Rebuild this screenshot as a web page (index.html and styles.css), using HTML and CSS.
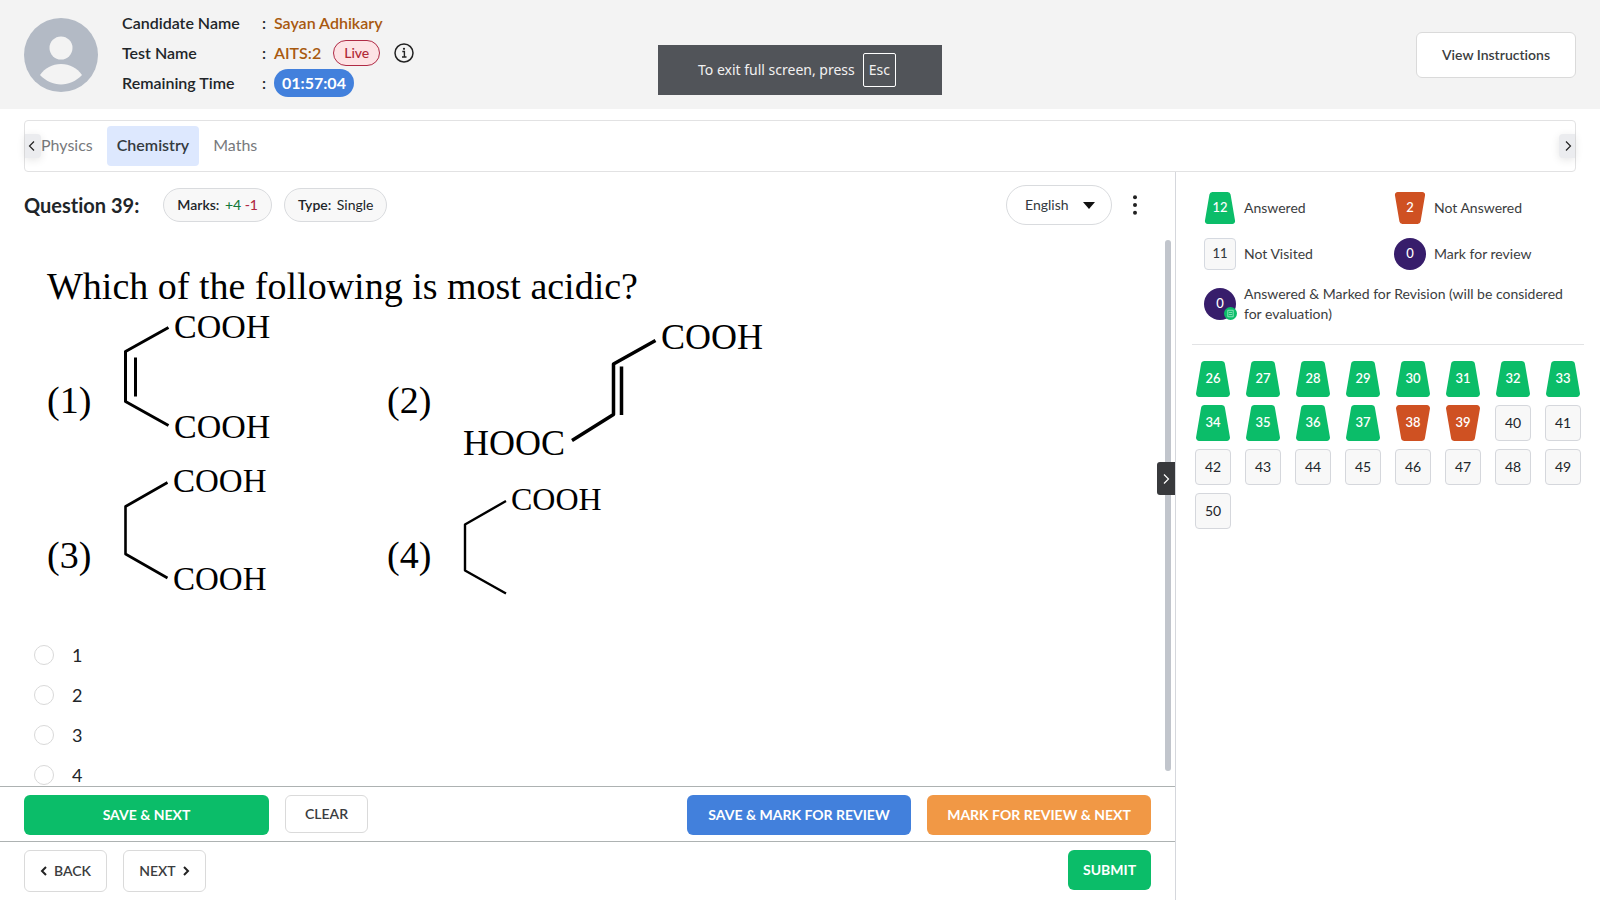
FILE: index.html
```html
<!DOCTYPE html>
<html lang="en">
<head>
<meta charset="utf-8">
<title>AITS:2</title>
<link rel="stylesheet" href="styles.css">
</head>
<body>
<svg class="defs" aria-hidden="true">
  <symbol id="answered" viewBox="0 0 36 36"><path fill="#0bbd69" d="M9.5 0h17a3.500 3.500 0 0 1 3.400 2.800l5 29.200a3.300 3.300 0 0 1-3.300 4H4.400a3.300 3.300 0 0 1-3.300-4L6.100 2.800A3.500 3.500 0 0 1 9.500 0z"/></symbol>
  <symbol id="unanswered" viewBox="0 0 36 36"><path fill="#cf5122" d="M4.400 0h27.200a3.300 3.300 0 0 1 3.300 4l-5 29.200a3.500 3.500 0 0 1-3.400 2.800h-17a3.500 3.500 0 0 1-3.400-2.800L1.100 4A3.300 3.300 0 0 1 4.400 0z"/></symbol>
</svg>
<header class="header">
  <svg class="avatar" viewBox="0 0 74 74" aria-hidden="true"><circle cx="37" cy="37" r="37" fill="#b3bac5"/><circle cx="37" cy="30" r="11.500" fill="#f3f3f3"/><path fill="#f3f3f3" d="M16 57c5-7 12-11 21-11s16 4 21 11c-6 6-13 9.500-21 9.500S22 63 16 57z"/></svg>
  <dl class="info">
    <dt>Candidate Name</dt><dd><b>:</b><span class="name">Sayan Adhikary</span></dd>
    <dt>Test Name</dt><dd><b>:</b><span class="name">AITS:2</span><span class="live">Live</span><svg class="info-icon" viewBox="0 0 20 20" aria-hidden="true"><circle cx="10" cy="10" r="9" fill="none" stroke="#222" stroke-width="1.500"/><path d="M8.300 8.500H10.400V14M8 14h4.500" fill="none" stroke="#222" stroke-width="1.400"/><circle cx="10" cy="5.800" r="1.100" fill="#222"/></svg></dd>
    <dt>Remaining Time</dt><dd><b>:</b><span class="timer">01:57:04</span></dd>
  </dl>
  <button class="btn instructions">View Instructions</button>
  <div class="toast">To exit full screen, press <kbd>Esc</kbd></div>
</header>
<nav class="tabs">
  <button class="tab">Physics</button>
  <button class="tab active">Chemistry</button>
  <button class="tab">Maths</button>
  <button class="scroll left" aria-label="Previous"><svg viewBox="0 0 16 24"><path d="M9 7.500 4.500 12l4.500 4.500"/></svg></button>
  <button class="scroll right" aria-label="Next"><svg viewBox="0 0 16 24"><path d="M7 7.500 11.500 12 7 16.500"/></svg></button>
</nav>
<main class="main">
  <section class="panel">
    <div class="qhead">
      <h1>Question 39:</h1>
      <span class="pill">Marks: <span class="pos">+4</span> <span class="neg">-1</span></span>
      <span class="pill">Type: <span class="kind">Single</span></span>
      <span class="lang"><select aria-label="Language"><option>English</option></select><svg viewBox="0 0 12 7" aria-hidden="true"><path d="M0 0h12L6 7z"/></svg></span>
      <button class="more" aria-label="More"><svg viewBox="0 0 6 20"><circle cx="3" cy="2.200" r="2"/><circle cx="3" cy="10" r="2"/><circle cx="3" cy="17.800" r="2"/></svg></button>
    </div>
    <div class="question">
      <p class="stem">Which of the following is most acidic?</p>
      <div class="figures">
        <div class="figure"><span>(1)</span><svg viewBox="0 0 160 150"><path d="M49.500 17.500 6.500 41.500V91.500L49.500 115.500M16.500 47.500V86.500" stroke-width="3"/><text x="55" y="28" font-size="34">COOH</text><text x="55" y="128" font-size="34">COOH</text></svg></div>
        <div class="figure"><span>(2)</span><svg class="wide" viewBox="0 0 310 150"><path d="M196.500 30.500 154.500 54V104.500L113 130.500M162.500 56.500V105" stroke-width="3.500"/><text x="202" y="39" font-size="36">COOH</text><text x="4" y="145" font-size="36">HOOC</text></svg></div>
        <div class="figure"><span>(3)</span><svg viewBox="0 0 160 150"><path d="M48.500 17.500 6.500 41.500V89L48.500 113" stroke-width="2.600"/><text x="54" y="27" font-size="33">COOH</text><text x="54" y="125" font-size="33">COOH</text></svg></div>
        <div class="figure"><span>(4)</span><svg class="wide" viewBox="0 0 310 150"><path d="M47 36 6 59.500V105.500L47 128.500" stroke-width="2.400"/><text x="52" y="45" font-size="32">COOH</text></svg></div>
      </div>
      <div class="choices">
        <label><input type="radio" name="answer">1</label>
        <label><input type="radio" name="answer">2</label>
        <label><input type="radio" name="answer">3</label>
        <label><input type="radio" name="answer">4</label>
      </div>
      <i class="thumb"></i>
    </div>
    <div class="bar actions">
      <button class="btn green save">SAVE &amp; NEXT</button>
      <button class="btn clear">CLEAR</button>
      <button class="btn blue push">SAVE &amp; MARK FOR REVIEW</button>
      <button class="btn orange">MARK FOR REVIEW &amp; NEXT</button>
    </div>
    <div class="bar steps">
      <button class="btn step"><svg viewBox="0 0 8 10" aria-hidden="true"><path d="M6 1 2 5l4 4"/></svg>BACK</button>
      <button class="btn step">NEXT<svg viewBox="0 0 8 10" aria-hidden="true"><path d="M2 1l4 4-4 4"/></svg></button>
      <button class="btn green submit push">SUBMIT</button>
    </div>
    <button class="collapse" aria-label="Collapse"><svg viewBox="0 0 16 32"><path d="M6 11.500 10.500 16 6 20.500"/></svg></button>
  </section>
  <aside class="side">
    <div class="legend">
      <div class="key"><span class="mark"><svg><use href="#answered"/></svg><em>12</em></span>Answered</div>
      <div class="key"><span class="mark"><svg><use href="#unanswered"/></svg><em>2</em></span>Not Answered</div>
      <div class="key"><span class="mark box"><em>11</em></span>Not Visited</div>
      <div class="key"><span class="mark round"><em>0</em></span>Mark for review</div>
      <div class="key full"><span class="mark round"><em>0</em><svg class="tick" viewBox="0 0 12 12"><circle cx="6" cy="6" r="6" fill="#0bbd69"/><path d="M3.500 3h5v6h-5zM4.500 5h3M4.500 7h3" fill="none" stroke="#9be5c3" stroke-width=".8"/></svg></span>Answered &amp; Marked for Revision (will be considered for evaluation)</div>
    </div>
    <div class="palette">
      <button class="num done"><svg><use href="#answered"/></svg><em>26</em></button>
      <button class="num done"><svg><use href="#answered"/></svg><em>27</em></button>
      <button class="num done"><svg><use href="#answered"/></svg><em>28</em></button>
      <button class="num done"><svg><use href="#answered"/></svg><em>29</em></button>
      <button class="num done"><svg><use href="#answered"/></svg><em>30</em></button>
      <button class="num done"><svg><use href="#answered"/></svg><em>31</em></button>
      <button class="num done"><svg><use href="#answered"/></svg><em>32</em></button>
      <button class="num done"><svg><use href="#answered"/></svg><em>33</em></button>
      <button class="num done"><svg><use href="#answered"/></svg><em>34</em></button>
      <button class="num done"><svg><use href="#answered"/></svg><em>35</em></button>
      <button class="num done"><svg><use href="#answered"/></svg><em>36</em></button>
      <button class="num done"><svg><use href="#answered"/></svg><em>37</em></button>
      <button class="num done"><svg><use href="#unanswered"/></svg><em>38</em></button>
      <button class="num done"><svg><use href="#unanswered"/></svg><em>39</em></button>
      <button class="num">40</button>
      <button class="num">41</button>
      <button class="num">42</button>
      <button class="num">43</button>
      <button class="num">44</button>
      <button class="num">45</button>
      <button class="num">46</button>
      <button class="num">47</button>
      <button class="num">48</button>
      <button class="num">49</button>
      <button class="num">50</button>
    </div>
  </aside>
</main>
</body>
</html>
```

FILE: styles.css
```css
* { box-sizing: border-box; }
body { margin: 0; height: 100vh; display: flex; flex-direction: column; overflow: hidden; background: #fff; color: #212529; font: 14px/20px Lato, "Noto Sans", sans-serif; font-variant-ligatures: none; }
button { font: inherit; color: inherit; padding: 0; border: 0; background: none; cursor: pointer; font-variant-ligatures: none; }
svg { display: block; }
em { font-style: normal; }
.defs { position: absolute; width: 0; height: 0; }

.header { position: relative; display: flex; align-items: center; padding: 8px 24px; background: #f3f3f3; }
.avatar { width: 74px; height: 74px; margin-right: 24px; }
.info { display: grid; grid-template-columns: 140px auto; grid-auto-rows: 30px; align-items: center; margin: 0; padding-bottom: 3px; font-size: 16px; font-weight: 600; }
.info dd { margin: 0; display: flex; align-items: center; }
.info b { width: 12px; font-weight: 600; }
.name { color: #a8590f; }
.live { margin: 0 14px 0 12px; padding: 1px 10px; border: 1px solid #b02a45; border-radius: 14px; background: #fde3e5; color: #b02a37; font-size: 14px; font-weight: 500; line-height: 22px; }
.info-icon { width: 20px; height: 20px; }
.timer { padding: 0 8px; border-radius: 14px; background: #4280dc; color: #fff; font-weight: 700; line-height: 28px; }
.btn { border: 1px solid #dadada; border-radius: 6px; background: #fff; color: #3b3d40; font-weight: 600; font-size: 14px; height: 40px; }
.instructions { margin-left: auto; width: 160px; height: 46px; }
.toast { position: absolute; top: 45px; left: 50%; width: 284px; height: 50px; margin-left: -142px; display: flex; align-items: center; justify-content: center; gap: 8px; padding-right: 6px; background: #515459; color: #f1f1f1; font-family: "Noto Sans", sans-serif; }
.toast kbd { padding: 0 5px; border: 1px solid #fff; border-radius: 2px; font: inherit; line-height: 32px; }

.tabs { position: relative; display: flex; align-items: center; gap: 4px; flex: none; height: 52px; margin: 11px 24px 0; padding-left: 6px; border: 1px solid #e2e2e3; border-radius: 4px; }
.tab { height: 40px; padding: 0 10px 2px; border-radius: 4px; color: #77797c; font-size: 16px; }
.tab.active { background: #dde8fe; color: #343a40; font-weight: 600; }
.scroll { position: absolute; top: 13px; width: 16px; height: 24px; background: #ebecef; box-shadow: 0 2px 8px #0000001a; }
.scroll.left { left: 0; border-radius: 0 4px 4px 0; }
.scroll.right { right: 0; border-radius: 4px 0 0 4px; }
.scroll path { fill: none; stroke: #222; stroke-width: 1.2; }

.main { flex: 1; min-height: 0; display: flex; }
.panel { position: relative; flex: 1; min-width: 0; display: flex; flex-direction: column; border-right: 1px solid #d5d7dc; }
.qhead { display: flex; align-items: center; height: 66px; padding: 0 37px 0 24px; gap: 12px; }
h1 { margin: 0 12px 0 0; font-size: 20px; font-weight: 700; }
.pill { padding: 0 13px; border: 1px solid #d9dbde; border-radius: 17px; background: #f8f8f8; font-weight: 600; line-height: 32px; white-space: pre; }
.pos { color: #157a3b; font-weight: 500; margin-left: 2px; }
.neg { color: #b02a45; font-weight: 500; }
.kind { font-weight: 400; margin-left: 2px; }
.lang { position: relative; margin-left: auto; }
.lang select { appearance: none; width: 106px; height: 40px; padding: 0 18px; border: 1px solid #d9dbde; border-radius: 20px; background: #fff; color: #343a40; font: inherit; }
.lang svg { position: absolute; right: 17px; top: 17px; width: 12px; height: 7px; fill: #111; }
.more { margin-left: 8px; }
.more svg { width: 6px; height: 20px; fill: #222; }

.question { position: relative; flex: 1; min-height: 0; overflow: hidden; padding: 27px 47px 0; }
.stem { margin: 0; color: #000; font: 38px/42px "Liberation Serif", serif; }
.figures { display: grid; grid-template-columns: 340px 1fr; row-gap: 5px; color: #000; font: 38px/44px "Liberation Serif", serif; margin-top: 3px; }
.figure { display: flex; align-items: flex-end; }
.figure span { width: 72px; padding-bottom: 38px; }
.figure svg { width: 160px; height: 150px; overflow: visible; }
.figure svg.wide { width: 310px; }
.figure path { fill: none; stroke: #000; stroke-linejoin: round; }
.choices { display: flex; flex-direction: column; gap: 20px; margin: 30px 0 0 -13px; font-size: 18px; }
.choices label { display: flex; align-items: center; gap: 18px; }
.choices input { appearance: none; width: 20px; height: 20px; margin: 0; border: 1px solid #d9d9d9; border-radius: 50%; background: #fff; }
.thumb { position: absolute; right: 4px; top: 2px; bottom: 15px; width: 6px; border-radius: 3px; background: #c1c5cc; }

.bar { display: flex; padding: 8px 24px 0; gap: 16px; border-top: 1px solid #adb2b2; }
.actions { height: 55px; }
.steps { height: 59px; }
.push { margin-left: auto; }
.green, .blue, .orange { border: 0; color: #fff; font-weight: 700; }
.green { background: #0bbd69; }
.blue { background: #4280dc; width: 224px; }
.orange { background: #f19845; width: 224px; }
.save { width: 245px; }
.clear { width: 83px; height: 38px; }
.step { display: flex; align-items: center; justify-content: center; gap: 6px; width: 83px; height: 42px; }
.step svg { width: 8px; height: 10px; }
.step path { fill: none; stroke: #222; stroke-width: 2; }
.submit { width: 83px; }
.collapse { position: absolute; right: 0; top: 290px; width: 18px; height: 33px; border-radius: 3px 0 0 3px; background: #38393c; }
.collapse svg { width: 16px; height: 32px; margin: auto; }
.collapse path { fill: none; stroke: #fff; stroke-width: 1.2; }

.side { width: 424px; padding: 20px 16px 0; }
.legend { display: grid; grid-template-columns: 190px 1fr; gap: 14px 0; padding: 0 12px 20px; border-bottom: 1px solid #e2e3e5; color: #3b3d40; }
.key { display: flex; align-items: center; gap: 8px; }
.full { grid-column: 1 / -1; }
.mark { position: relative; flex: none; display: grid; place-items: center; width: 32px; height: 32px; color: #fff; font-size: 13px; font-weight: 500; }
.mark svg, .mark em, .num svg, .num em { grid-area: 1 / 1; }
.mark svg { width: 32px; height: 32px; }
.mark em, .num em { position: relative; padding-bottom: 2px; }
.box { border: 1px solid #d5d9e0; border-radius: 4px; background: #f8f8f8; color: #343a40; }
.round { border-radius: 50%; background: #371d6b; }
.mark .tick { position: absolute; right: -1px; bottom: 0; width: 13px; height: 13px; }
.palette { display: grid; grid-template-columns: repeat(8, 36px); justify-content: space-between; row-gap: 8px; padding: 16px 3px 0; }
.num { height: 36px; border: 1px solid #d5d7dc; border-radius: 4px; background: #f8f8f8; font-size: 14px; }
.num.done { display: grid; place-items: center; border: 0; background: none; color: #fff; font-size: 13px; font-weight: 600; }
.num svg { width: 36px; height: 36px; }
```
